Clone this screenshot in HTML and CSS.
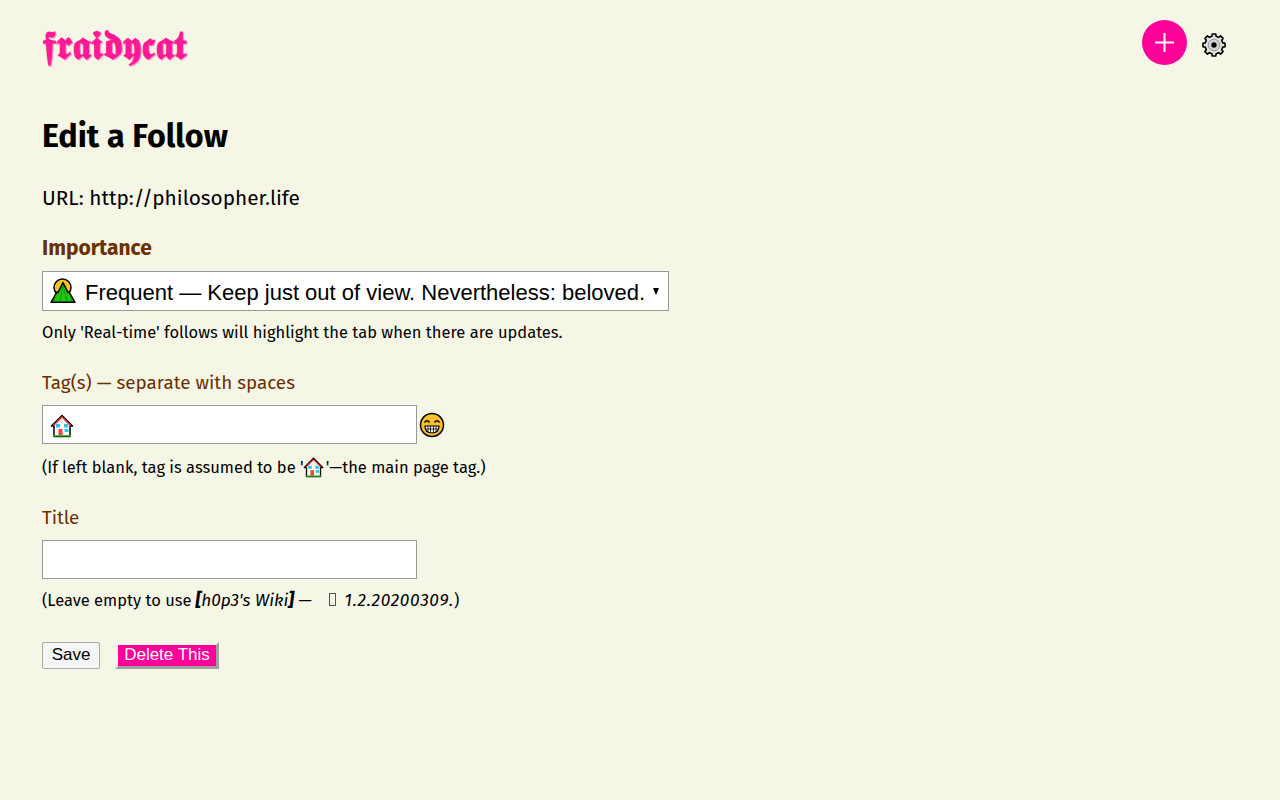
FILE: index.html
```html
<!DOCTYPE html>
<html>
	<head>
		<title>Edit a Follow</title>
		<link rel="stylesheet" href="styles.css">
	</head>
	<body>
		<div class="top">
			<a class="logo" href="#">𝖋𝖗𝖆𝖎𝖉𝖞𝖈𝖆𝖙</a>
			<div class="nav">
				<a class="add" href="#">
					<svg width="19" height="19" viewBox="0 0 19 19"><path d="M9.5 0v19M0 9.5h19" stroke="#fff" stroke-width="2" fill="none"/></svg>
				</a>
				<a class="gear" href="#">
					<svg width="24" height="24" viewBox="0 0 24 24">
						<polygon points="23.07,10.25 23.07,13.75 20.75,14.1 19.67,16.7 21.06,18.59 18.59,21.06 16.7,19.67 14.1,20.75 13.75,23.07 10.25,23.07 9.9,20.75 7.3,19.67 5.41,21.06 2.94,18.59 4.33,16.7 3.25,14.1 .93,13.75 .93,10.25 3.25,9.9 4.33,7.3 2.94,5.41 5.41,2.94 7.3,4.33 9.9,3.25 10.25,.93 13.75,.93 14.1,3.25 16.7,4.33 18.59,2.94 21.06,5.41 19.67,7.3 20.75,9.9" fill="#e2e2e2" stroke="#000" stroke-width="1.600" stroke-linejoin="round"/>
						<circle cx="12" cy="12" r="5.800" fill="#d4d4d4" stroke="#999" stroke-width="1"/>
						<circle cx="12" cy="12" r="2.700" fill="#000"/>
					</svg>
				</a>
			</div>
		</div>
		<h2>Edit a Follow</h2>
		<p class="url">URL: http://philosopher.life</p>
		<div class="field">
			<label class="strong">Importance</label>
			<div class="select">
				<svg class="emo sunrise" width="26" height="26" viewBox="0 0 26 26">
					<circle cx="12.500" cy="9.500" r="8.500" fill="#fbc02d" stroke="#000" stroke-width="1.500"/>
					<path d="M1 24.300 7 14l1 .5L13 4.500l5 10 1-.5 6 10.300z" fill="#22c412" stroke="#000" stroke-width="1.500" stroke-linejoin="round"/>
					<path d="M13 7l-3 16M13 7l4 16M6 17l-2 6M20 17l2 6" stroke="#0f9a0a" stroke-width="1" fill="none"/>
				</svg>
				<span class="seltext">Frequent — Keep just out of view. Nevertheless: beloved.</span>
				<span class="arrow"></span>
			</div>
			<p class="note">Only 'Real-time' follows will highlight the tab when there are updates.</p>
		</div>
		<div class="field tags">
			<label>Tag(s) — separate with spaces</label>
			<div class="inputrow">
				<div class="inputwrap">
					<input type="text" class="tagbox">
					<svg class="emo house" width="24" height="24" viewBox="0 0 24 24">
						<path d="M12 1.500 1.500 12H4v10.500h16V12h2.500z" fill="#fff" stroke="#000" stroke-width="1.500" stroke-linejoin="round"/>
						<path d="M12 3 3.500 11.500M12 3l8.500 8.500" stroke="#e53935" stroke-width="1.500" fill="none"/>
						<rect x="6" y="10" width="4" height="3.500" fill="#29c5f6"/>
						<rect x="14" y="10" width="4" height="3.500" fill="#29c5f6"/>
						<rect x="8.500" y="15" width="4" height="6.500" fill="#f44336"/>
						<rect x="14.500" y="15" width="4" height="3" fill="#29c5f6"/>
						<rect x="3" y="21" width="18" height="1.500" fill="#3dbb2f"/>
					</svg>
				</div>
				<svg class="grin" width="26" height="26" viewBox="0 0 26 26">
					<circle cx="13" cy="13" r="11.500" fill="#fbc02d" stroke="#000" stroke-width="1.500"/>
					<path d="M5.500 10.500q2.500-3.500 5 0M15.500 10.500q2.500-3.500 5 0" stroke="#000" stroke-width="1.500" fill="none"/>
					<path d="M6 14h14q0 7-7 7t-7-7z" fill="#fff" stroke="#000" stroke-width="1.200"/>
					<path d="M6.500 17h13M9 14v6M11.500 14v7M14.500 14v7M17 14v6" stroke="#000" stroke-width=".8" fill="none"/>
				</svg>
			</div>
			<p class="note hint">(If left blank, tag is assumed to be '<svg class="inlinehouse" width="21" height="21" viewBox="0 0 24 24">
				<path d="M12 1.500 1.500 12H4v10.500h16V12h2.500z" fill="#fff" stroke="#000" stroke-width="1.500" stroke-linejoin="round"/>
				<path d="M12 3 3.500 11.500M12 3l8.500 8.500" stroke="#e53935" stroke-width="1.500" fill="none"/>
				<rect x="6" y="10" width="4" height="3.500" fill="#29c5f6"/>
				<rect x="14" y="10" width="4" height="3.500" fill="#29c5f6"/>
				<rect x="8.500" y="15" width="4" height="6.500" fill="#f44336"/>
				<rect x="14.500" y="15" width="4" height="3" fill="#29c5f6"/>
				<rect x="3" y="21" width="18" height="1.500" fill="#3dbb2f"/>
			</svg>'—the main page tag.)</p>
		</div>
		<div class="field title">
			<label>Title</label>
			<input type="text" class="tagbox">
			<p class="note">(Leave empty to use <em><b>[</b>h0p3's Wiki<b>]</b> — <span class="tofu"></span> <span class="date">1.2.20200309.</span></em>)</p>
		</div>
		<div class="buttons">
			<button class="save" type="button">Save</button>
			<button class="del" type="button">Delete This</button>
		</div>
	</body>
</html>
```
FILE: styles.css
```css
body{
	margin: 0;
	padding: 20px 42px;
	background-color: #f5f6e6;
	color: #000;
	font-family: "Fira Sans", "Noto Sans", sans-serif;
	font-size: 16.5px;
}
.top{
	display: flex;
	justify-content: space-between;
	align-items: flex-start;
	height: 95px;
}
.logo{
	font-family: "DejaVu Serif", "Liberation Serif", serif;
	font-weight: bold;
	font-size: 40px;
	line-height: 50px;
	color: #ff1a94;
	text-shadow: 1px 1px 0 #ff9ccf;
	text-decoration: none;
}
.nav{
	display: flex;
	align-items: flex-start;
	gap: 15px;
	padding-right: 12px;
}
.add{
	display: flex;
	align-items: center;
	justify-content: center;
	width: 45px;
	height: 45px;
	border-radius: 50%;
	background-color: #ff0099;
}
.gear{
	display: flex;
	margin-top: 13px;
}
h2{
	margin: 0 0 26px;
	font-size: 32.3px;
	line-height: 44px;
}
.url{
	margin: 0 0 21px;
	font-size: 20.8px;
	line-height: 28px;
}
label{
	display: block;
	color: #6b3000;
	font-size: 18.85px;
	line-height: 28px;
}
.strong{
	font-weight: bold;
	font-size: 21px;
}
.select{
	display: flex;
	align-items: center;
	box-sizing: border-box;
	width: 627px;
	height: 40px;
	margin-top: 9px;
	padding: 0 8px 0 7px;
	background-color: #fff;
	border: 1px solid #999;
	font-family: "Liberation Sans", sans-serif;
	font-size: 22px;
}
.seltext{
	flex: 1;
	margin-left: 9px;
	padding-top: 3px;
	white-space: nowrap;
}
.arrow{
	width: 0;
	height: 0;
	border-left: 3.500px solid transparent;
	border-right: 3.500px solid transparent;
	border-top: 7px solid #000;
	margin-right: 1px;
}
.note{
	margin: 9px 0 0;
	line-height: 26px;
}
.hint{
	margin-top: 11px;
}
.tags{
	margin-top: 23px;
}
.inputrow{
	display: flex;
	align-items: center;
	gap: 2px;
	margin-top: 8px;
}
.inputwrap{
	position: relative;
	display: flex;
}
.tagbox{
	display: block;
	box-sizing: border-box;
	width: 375px;
	height: 39px;
	margin: 0;
	border: 1px solid #999;
	background-color: #fff;
}
.house{
	position: absolute;
	left: 8px;
	top: 9px;
}
.inlinehouse{
	vertical-align: -5px;
	margin: 0 2px 0 -1px;
}
.title{
	margin-top: 23px;
}
.title .tagbox{
	margin-top: 8px;
}
em{
	font-size: 17.3px;
}
em b{
	font-weight: 800;
}
.date{
	letter-spacing: .7px;
}
.tofu{
	display: inline-block;
	width: 7px;
	height: 13px;
	margin: 0 4px 0 13px;
	border: 1px solid #555;
	box-sizing: border-box;
}
.buttons{
	display: flex;
	gap: 15px;
	margin-top: 28px;
}
button{
	font-family: "Liberation Sans", sans-serif;
	font-size: 17px;
	cursor: pointer;
}
.save{
	box-sizing: border-box;
	width: 58px;
	height: 27px;
	padding: 0 0 2px;
	background-color: #f5f5f5;
	border: 1px solid #aaa;
	border-radius: 2px;
}
.del{
	box-sizing: border-box;
	width: 104px;
	height: 27px;
	padding: 0 0 4px;
	background-color: #ff0099;
	color: #fff;
	border: 3px solid;
	border-color: #f5f6e6 #a0a0a0 #a0a0a0 #f5f6e6;
}
```
